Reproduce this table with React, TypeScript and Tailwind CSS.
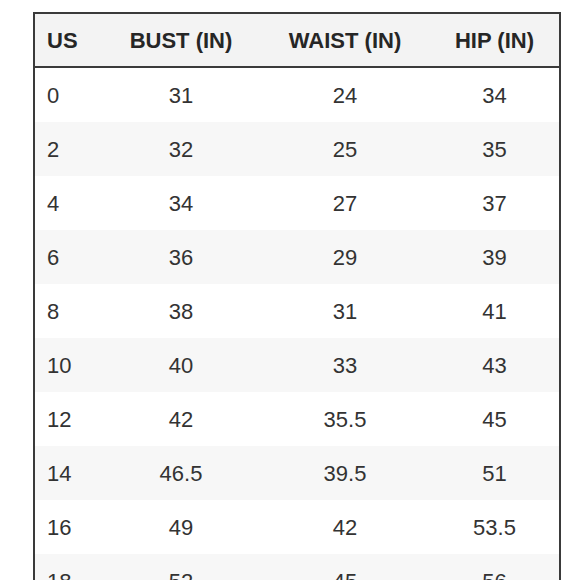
const rows: [string, string, string, string][] = [
  ['0', '31', '24', '34'],
  ['2', '32', '25', '35'],
  ['4', '34', '27', '37'],
  ['6', '36', '29', '39'],
  ['8', '38', '31', '41'],
  ['10', '40', '33', '43'],
  ['12', '42', '35.5', '45'],
  ['14', '46.5', '39.5', '51'],
  ['16', '49', '42', '53.5'],
  ['18', '52', '45', '56'],
];

const cols = 'grid grid-cols-[77px_138px_190px_1fr] items-center';

export default function App() {
  return (
    <div className="h-[580px] w-[580px] overflow-hidden bg-white pt-[12px] font-['Liberation_Sans',Arial,sans-serif]">
      <div className="ml-[33px] w-[528px] border-2 border-b-0 border-[#3a3a3a]">
        {/* Header */}
        <div className={`${cols} h-[52px] bg-[#f3f3f3] text-[22px] font-bold text-[#262626] border-b-2 border-[#3a3a3a] box-content`}>
          <div className="pl-3">US</div>
          <div className="text-center">BUST (IN)</div>
          <div className="text-center">WAIST (IN)</div>
          <div className="pr-[10px] text-center">HIP (IN)</div>
        </div>

        {rows.map((r, i) => (
          <div
            key={r[0]}
            className={`${cols} h-[54px] text-[22px] text-[#333333] ${i % 2 === 1 ? 'bg-[#f7f7f7]' : 'bg-white'}`}
          >
            <div className="pl-3">{r[0]}</div>
            <div className="text-center">{r[1]}</div>
            <div className="text-center">{r[2]}</div>
            <div className="pr-[10px] text-center">{r[3]}</div>
          </div>
        ))}
      </div>
    </div>
  );
}
